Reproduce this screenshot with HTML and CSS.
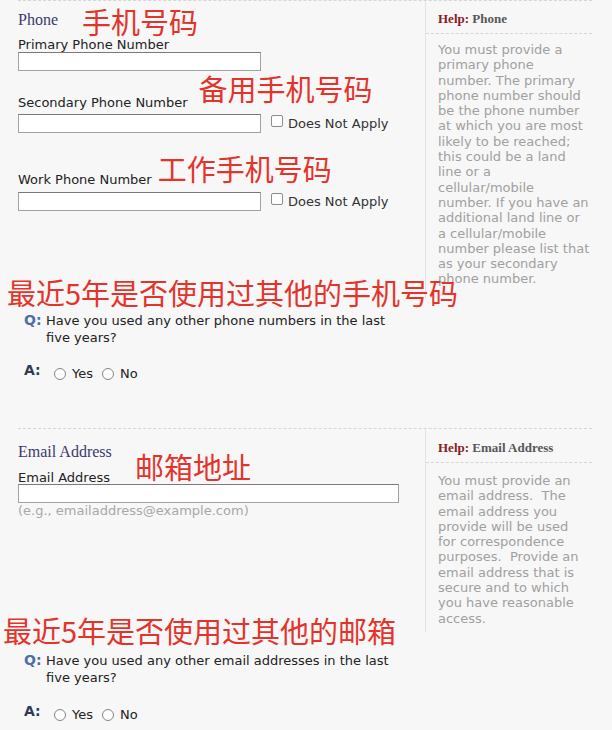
FILE: index.html
```html
<!DOCTYPE html>
<html lang="en">
<head>
<meta charset="utf-8">
<title>Phone and Email</title>
<link rel="stylesheet" href="styles.css">
</head>
<body>
<div class="page">
  <section class="sec sec-phone">
    <div class="main">
      <div class="head-row">
        <h2 class="sec-title">Phone</h2>
        <span class="note note-phone">手机号码</span>
      </div>
      <div class="field-label lbl-primary">Primary Phone Number</div>
      <div class="field-row row-in1">
        <input class="text-input phone-input" type="text">
      </div>
      <div class="label-row row-secondary">
        <span class="field-label">Secondary Phone Number</span>
        <span class="note note-secondary">备用手机号码</span>
      </div>
      <div class="field-row row-in2">
        <input class="text-input phone-input" type="text">
        <label class="na"><input class="check" type="checkbox"><span class="na-text">Does Not Apply</span></label>
      </div>
      <div class="label-row row-work">
        <span class="field-label">Work Phone Number</span>
        <span class="note note-work">工作手机号码</span>
      </div>
      <div class="field-row row-in3">
        <input class="text-input phone-input" type="text">
        <label class="na"><input class="check" type="checkbox"><span class="na-text">Does Not Apply</span></label>
      </div>
      <p class="note note-big note-q1">最近5年是否使用过其他的手机号码</p>
      <div class="q-row q1">
        <span class="q-mark">Q:</span>
        <span class="q-text">Have you used any other phone numbers in the last five years?</span>
      </div>
      <div class="a-row a1">
        <span class="a-mark">A:</span>
        <span class="radios">
          <input class="radio" type="radio" name="otherphone"><span class="opt">Yes</span>
          <input class="radio" type="radio" name="otherphone"><span class="opt">No</span>
        </span>
      </div>
    </div>
    <aside class="help help-phone">
      <div class="help-head"><span class="help-key">Help:</span> Phone</div>
      <div class="help-body">You must provide a<br>primary phone<br>number. The primary<br>phone number should<br>be the phone number<br>at which you are most<br>likely to be reached;<br>this could be a land<br>line or a<br>cellular/mobile<br>number. If you have an<br>additional land line or<br>a cellular/mobile<br>number please list that<br>as your secondary<br>phone number.</div>
    </aside>
  </section>

  <section class="sec sec-email">
    <div class="main">
      <h2 class="sec-title email-title">Email Address</h2>
      <div class="label-row row-email">
        <span class="field-label">Email Address</span>
        <span class="note note-email">邮箱地址</span>
      </div>
      <div class="field-row row-in-email">
        <input class="text-input email-input" type="text">
      </div>
      <div class="hint">(e.g., emailaddress@example.com)</div>
      <p class="note note-big note-q2">最近5年是否使用过其他的邮箱</p>
      <div class="q-row q2">
        <span class="q-mark">Q:</span>
        <span class="q-text">Have you used any other email addresses in the last five years?</span>
      </div>
      <div class="a-row a2">
        <span class="a-mark">A:</span>
        <span class="radios">
          <input class="radio" type="radio" name="otheremail"><span class="opt">Yes</span>
          <input class="radio" type="radio" name="otheremail"><span class="opt">No</span>
        </span>
      </div>
    </div>
    <aside class="help help-email">
      <div class="help-head"><span class="help-key">Help:</span> Email Address</div>
      <div class="help-body">You must provide an<br>email address.&nbsp; The<br>email address you<br>provide will be used<br>for correspondence<br>purposes.&nbsp; Provide an<br>email address that is<br>secure and to which<br>you have reasonable<br>access.</div>
    </aside>
  </section>
</div>
</body>
</html>
```
FILE: styles.css
```css
html, body {
  margin: 0;
  padding: 0;
}
body {
  background: #f7f7f7;
  font-family: "DejaVu Sans", Verdana, sans-serif;
  font-size: 13px;
  color: #222;
}
.page {
  padding: 0 20px 0 18px;
}
.sec {
  display: flex;
  align-items: flex-start;
  border-top: 1px dashed #d6d6d6;
}
.main {
  width: 407px;
  flex: none;
}
.sec-phone .main {
  padding: 6px 0 46px 0;
}
.sec-email .main {
  padding: 14px 0 0 0;
}

/* annotations */
.note {
  font-family: "Noto Sans CJK SC", sans-serif;
  font-size: 29px;
  line-height: 29px;
  color: #e3342c;
  white-space: nowrap;
  flex: none;
}
.note-big {
  display: block;
  margin: 0;
  position: relative;
  z-index: 1;
}
.note-q1 {
  margin: 67px 0 0 -11px;
}
.note-q2 {
  margin: 98px 0 0 -15px;
}

/* headings */
.head-row {
  display: flex;
  align-items: flex-end;
}
.sec-title {
  margin: 0 0 6px 0;
  font-family: "Liberation Serif", "Times New Roman", serif;
  font-weight: normal;
  font-size: 16px;
  line-height: 18px;
  color: #3a3a6e;
}
.email-title {
  margin: 0;
}
.note-phone {
  margin: 0 0 -1px 24px;
}

/* labels and inputs */
.field-label {
  display: block;
  line-height: 15px;
  color: #222;
  white-space: nowrap;
}
.lbl-primary {
  margin-top: 2px;
}
.label-row {
  display: flex;
  align-items: flex-end;
}
.row-secondary {
  margin-top: 3px;
}
.note-secondary {
  margin: 0 0 7px 11px;
}
.row-work {
  margin-top: 21px;
}
.note-work {
  margin: 0 0 4px 6px;
}
.row-email {
  margin-top: 9px;
}
.note-email {
  margin: -20px 0 4px 25px;
}
.field-row {
  display: flex;
  align-items: flex-start;
}
.row-in1 {
  margin-top: 0;
}
.row-in2 {
  margin-top: 4px;
}
.row-in3 {
  margin-top: 5px;
}
.row-in-email {
  margin-top: -1px;
}
.text-input {
  box-sizing: border-box;
  height: 19px;
  margin: 0;
  padding: 0 2px;
  border: 1px solid #a2a2a2;
  border-top-color: #7a7a7a;
  background: #fff;
  font: inherit;
}
.phone-input {
  width: 243px;
}
.email-input {
  width: 381px;
}
.na {
  display: flex;
  align-items: flex-start;
  margin: 2px 0 0 10px;
  line-height: 15px;
  color: #333;
  white-space: nowrap;
}
.check {
  appearance: none;
  -webkit-appearance: none;
  box-sizing: border-box;
  width: 12px;
  height: 12px;
  margin: -1px 0 0 0;
  border: 1px solid #8c8c8c;
  border-radius: 2px;
  background: #fff;
}
.na-text {
  margin-left: 5px;
}
.hint {
  line-height: 15px;
  color: #a8a8a8;
}

/* Q and A */
.q-row {
  display: flex;
  align-items: flex-start;
  margin-top: 5px;
}
.q2 {
  margin-top: 7px;
}
.q-mark,
.a-mark {
  width: 22px;
  flex: none;
  margin-left: 6px;
  font-weight: bold;
  font-size: 14px;
  line-height: 17px;
}
.q-mark {
  color: #4d6eaa;
}
.a-mark {
  color: #2e3c58;
}
.q-text {
  width: 360px;
  line-height: 17px;
  color: #222;
}
.a-row {
  display: flex;
  align-items: flex-start;
}
.a1 {
  margin-top: 16px;
}
.a2 {
  margin-top: 17px;
}
.radios {
  display: flex;
  align-items: center;
  margin: 3px 0 0 8px;
  line-height: 17px;
  color: #222;
}
.radio {
  appearance: none;
  -webkit-appearance: none;
  box-sizing: border-box;
  width: 12px;
  height: 12px;
  margin: 0 6px 0 0;
  border: 1px solid #858585;
  border-radius: 50%;
  background: #fdfdfd;
}
.opt {
  margin-right: 9px;
}

/* help panel */
.help {
  width: 167px;
  flex: none;
  box-sizing: border-box;
  border-left: 1px solid #e3e3e3;
}
.help-head {
  padding: 10px 0 7px 12px;
  border-bottom: 1px dashed #d6d6d6;
  font-family: "Liberation Serif", "Times New Roman", serif;
  font-weight: bold;
  font-size: 13px;
  line-height: 15px;
  color: #575757;
  white-space: nowrap;
}
.help-email .help-head {
  padding-top: 11px;
}
.help-key {
  color: #8b1d1d;
}
.help-body {
  padding: 8px 0 12px 12px;
  line-height: 15.3px;
  color: #a0a0a0;
  white-space: nowrap;
}
.help-email .help-body {
  padding: 10px 0 6px 12px;
}
```
